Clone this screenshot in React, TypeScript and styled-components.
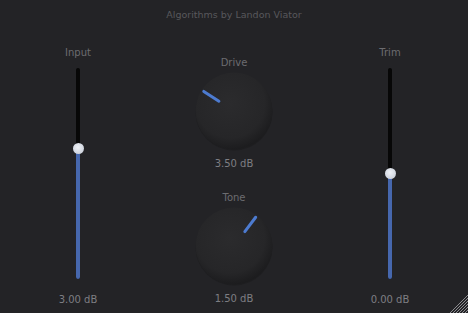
import React from "react";
import styled, { createGlobalStyle } from "styled-components";

const GlobalStyle = createGlobalStyle`
  html, body {
    margin: 0;
    padding: 0;
    background: #232326;
  }
  body {
    font-family: "DejaVu Sans", Verdana, sans-serif;
  }
`;

const Editor = styled.div`
  position: relative;
  width: 468px;
  height: 313px;
  background: #232326;
  overflow: hidden;
`;

const Title = styled.div`
  height: 30px;
  line-height: 30px;
  text-align: center;
  font-size: 9.5px;
  color: #58585c;
`;

const Columns = styled.div`
  display: grid;
  grid-template-columns: 156px 156px 156px;
`;

const Column = styled.div<{ $top: number }>`
  display: flex;
  flex-direction: column;
  align-items: center;
  padding-top: ${({ $top }) => $top}px;
`;

const Label = styled.div`
  font-size: 10px;
  line-height: 12px;
  height: 12px;
  color: #6c6c70;
`;

const Value = styled.div`
  font-size: 10px;
  line-height: 12px;
  height: 12px;
  color: #7e7e83;
`;

const Track = styled.div`
  position: relative;
  width: 4px;
  height: 211px;
  margin: 9px 0 15px;
  border-radius: 2px;
  background: #070707;
`;

const Fill = styled.div`
  position: absolute;
  left: 0;
  right: 0;
  bottom: 0;
  border-radius: 2px;
  background: #4667ad;
`;

const Thumb = styled.div`
  position: absolute;
  left: 50%;
  width: 11px;
  height: 11px;
  margin-left: -5.5px;
  margin-top: -5.5px;
  border-radius: 50%;
  background: radial-gradient(circle at 45% 40%, #eef1f6 0%, #d3d8e1 60%, #b9bfca 100%);
`;

const KnobBox = styled.div`
  width: 80px;
  height: 80px;
  margin: 2px 0 7px;
`;

const Spacer = styled.div`
  height: 22px;
`;

const Corner = styled.svg`
  position: absolute;
  right: 0;
  bottom: 0;
`;

interface SliderProps {
  label: string;
  value: string;
  amount: number;
}

const Slider: React.FC<SliderProps> = ({ label, value, amount }) => {
  const pos = (1 - amount) * 211;
  return (
    <Column $top={17}>
      <Label>{label}</Label>
      <Track>
        <Fill style={{ top: pos }} />
        <Thumb style={{ top: pos }} />
      </Track>
      <Value>{value}</Value>
    </Column>
  );
};

interface KnobProps {
  angle: number;
  id: string;
}

const Knob: React.FC<KnobProps> = ({ angle, id }) => {
  const rad = (angle * Math.PI) / 180;
  const x1 = 40 + Math.sin(rad) * 18;
  const y1 = 40 - Math.cos(rad) * 18;
  const x2 = 40 + Math.sin(rad) * 36;
  const y2 = 40 - Math.cos(rad) * 36;
  return (
    <svg width="80" height="80" viewBox="0 0 80 80">
      <defs>
        <radialGradient id={`kg-${id}`} cx="45%" cy="40%" r="60%">
          <stop offset="0%" stopColor="#2b2b2d" />
          <stop offset="75%" stopColor="#262628" />
          <stop offset="100%" stopColor="#1c1c1e" />
        </radialGradient>
      </defs>
      <circle cx="40" cy="41" r="38.5" fill="#1b1b1d" opacity="0.6" />
      <circle cx="40" cy="40" r="38.5" fill={`url(#kg-${id})`} />
      <line
        x1={x1}
        y1={y1}
        x2={x2}
        y2={y2}
        stroke="#4d7bd0"
        strokeWidth="3"
        strokeLinecap="round"
      />
    </svg>
  );
};

export default function App() {
  return (
    <Editor>
      <GlobalStyle />
      <Title>Algorithms by Landon Viator</Title>
      <Columns>
        <Slider label="Input" value="3.00 dB" amount={0.62} />
        <Column $top={27}>
          <Label>Drive</Label>
          <KnobBox>
            <Knob id="drive" angle={-57} />
          </KnobBox>
          <Value>3.50 dB</Value>
          <Spacer />
          <Label>Tone</Label>
          <KnobBox>
            <Knob id="tone" angle={37} />
          </KnobBox>
          <Value>1.50 dB</Value>
        </Column>
        <Slider label="Trim" value="0.00 dB" amount={0.5} />
      </Columns>
      <Corner width="18" height="18" viewBox="0 0 18 18">
        {[3, 6, 9, 12, 15, 18].map((d) => (
          <line
            key={d}
            x1={18 - d}
            y1="18"
            x2="18"
            y2={18 - d}
            stroke="#8c8c90"
            strokeWidth="1"
          />
        ))}
      </Corner>
    </Editor>
  );
}
